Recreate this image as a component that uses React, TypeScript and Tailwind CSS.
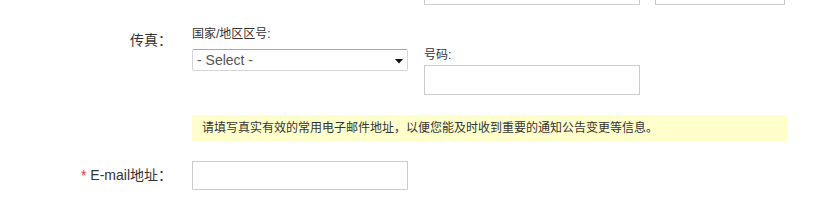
import React from "react";

export default function App() {
  return (
    <div className="w-[837px] h-[203px] bg-white text-[#333] font-['Liberation_Sans','Noto_Sans_CJK_SC',sans-serif] overflow-hidden">
      <div className="h-[5px] overflow-hidden flex items-end pl-[424px] gap-[15px]">
        <div className="w-[216px] h-[30px] border border-[#cccccc] shrink-0" />
        <div className="w-[130px] h-[30px] border border-[#cccccc] shrink-0" />
      </div>

      <div className="flex mt-[20px]">
        <div className="w-[172px] shrink-0 text-right text-[14px] leading-[20px] pt-[5px]">传真：</div>
        <div className="ml-[20px] flex gap-[16px]">
          <div className="flex flex-col">
            <div className="text-[12px] leading-[18px] h-[18px]">国家/地区区号:</div>
            <div className="mt-[6px] w-[216px] h-[22px] border border-[#d6d6d6] border-t-[#a8a8a8] rounded-[2px] flex items-center justify-between pl-[4px] pr-[4px]">
              <span className="text-[14px] text-[#555]">- Select -</span>
              <svg width="8" height="5" viewBox="0 0 8 5" className="mt-[2px]">
                <polygon points="0,0 8,0 4,4.5" fill="#111" />
              </svg>
            </div>
          </div>
          <div className="flex flex-col pt-[22px]">
            <div className="text-[12px] leading-[16px] h-[16px]">号码:</div>
            <div className="mt-[2px] w-[216px] h-[30px] border border-[#cccccc]" />
          </div>
        </div>
      </div>

      <div className="mt-[20px] ml-[192px] w-[596px] h-[26px] bg-[#ffffcc] text-[12px] leading-[26px] pl-[10px]">
        请填写真实有效的常用电子邮件地址，以便您能及时收到重要的通知公告变更等信息。
      </div>

      <div className="flex mt-[20px]">
        <div className="w-[172px] shrink-0 text-right text-[14px] leading-[29px]">
          <span className="text-[#e4393c]">* </span>E-mail地址：
        </div>
        <div className="ml-[20px] w-[216px] h-[29px] border border-[#cccccc]" />
      </div>
    </div>
  );
}
